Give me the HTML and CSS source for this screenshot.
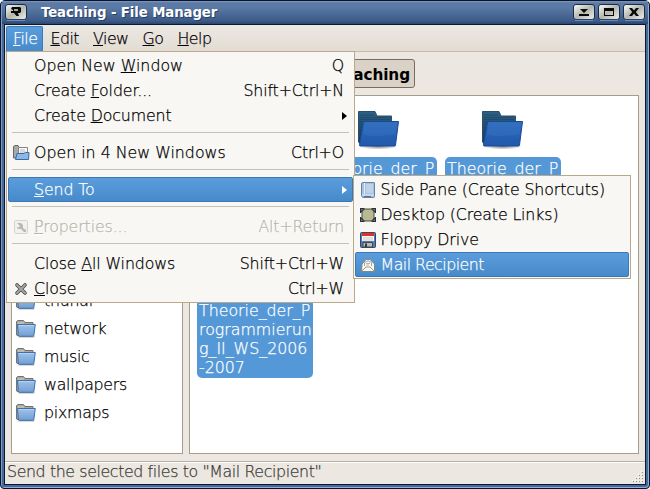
FILE: index.html
```html
<!DOCTYPE html>
<html lang="en">
<head>
<meta charset="utf-8">
<title>Teaching - File Manager</title>
<link rel="stylesheet" href="styles.css">
</head>
<body>
<svg width="0" height="0" class="defs">
  <defs>
    <linearGradient id="btn" x1="0" y1="0" x2="1" y2="1"><stop offset="0" stop-color="#fdfdfa"/><stop offset=".5" stop-color="#b5b7ae"/><stop offset="1" stop-color="#f0f0ea"/></linearGradient>
    <linearGradient id="fb" x1="0" y1="0" x2="0" y2="1"><stop offset="0" stop-color="#2d6089"/><stop offset="1" stop-color="#1f3950"/></linearGradient>
    <linearGradient id="ff" x1="0" y1="0" x2="0" y2="1"><stop offset="0" stop-color="#2d6bbd"/><stop offset="1" stop-color="#2158aa"/></linearGradient>
    <radialGradient id="sh"><stop offset="0" stop-color="#000" stop-opacity=".5"/><stop offset="1" stop-color="#000" stop-opacity="0"/></radialGradient>
    <linearGradient id="sf" x1="0" y1="0" x2="0" y2="1"><stop offset="0" stop-color="#a0c2e8"/><stop offset="1" stop-color="#709fd4"/></linearGradient>
    <symbol id="big" viewBox="0 0 44 40">
      <ellipse cx="21.500" cy="36.500" rx="20" ry="3" fill="url(#sh)"/>
      <path d="M1.500 1.500H18l2 4.500h14.500V34H3.500L1.500 32z" fill="url(#fb)" stroke="#294f6c"/>
      <path d="M3 5h14M3 7.500h30M3 9.500h30M3 11.500h3M3 14h3M3 17h3M3 20h3M3 23h2M3 26h1" stroke="#173d58" stroke-width=".8" opacity=".6"/>
      <path d="M6.500 11.500h35l-3 23.500q0 1-1 1H3.500q-1.500 0-1-1.500z" fill="url(#ff)" stroke="#174a99"/>
      <path d="M7.500 12.500h33l-2 12Q22 27 6 25z" fill="#4d86cf" opacity=".22"/>
    </symbol>
    <symbol id="small" viewBox="0 0 21 19">
      <path d="M.5 16V2.500L2 1.500h5.500L9 3.500h8V8H3v9z" fill="#aaa9a4" stroke="#74736f"/>
      <path d="M2 4h6M2 6h14" stroke="#d0d0cc"/>
      <path d="M2.500 17.800h16" stroke="#bbb9b5" stroke-width="1.500"/>
      <path d="M1.500 5.500h17.800l-1.500 11q0 .8-1 .8H3.500q-1 0-1.200-1z" fill="url(#sf)" stroke="#3b70ad"/>
      <path d="M2.800 6.500h15.300" stroke="#c4daf1" opacity=".7"/>
    </symbol>
  </defs>
</svg>
<div class="window">
  <header class="titlebar">
    <svg class="wbtn" width="22" height="17" viewBox="0 0 22 17"><rect x=".5" y=".5" width="21" height="15" rx="2.500" fill="url(#btn)" stroke="#182b48"/><path d="M2 16.300h18" stroke="#7398cc"/><path d="M7 3h8l1 1v4l-1 1h-2l1 3h-2.500L9 9H6V7h2V6L6 5z" fill="#090909"/><path d="M9 5h4v2H9z" fill="#a6a99e"/></svg>
    <h1>Teaching - File Manager</h1>
    <div class="controls">
      <svg class="wbtn" width="22" height="17" viewBox="0 0 22 17"><rect x=".5" y=".5" width="21" height="15" rx="2.500" fill="url(#btn)" stroke="#182b48"/><path d="M2 16.300h18" stroke="#7398cc"/><path d="M7 5h8l-4 4zM6 10h10v2H6z" fill="#090909"/></svg>
      <svg class="wbtn" width="22" height="17" viewBox="0 0 22 17"><rect x=".5" y=".5" width="21" height="15" rx="2.500" fill="url(#btn)" stroke="#182b48"/><path d="M2 16.300h18" stroke="#7398cc"/><path d="M6 4h10v8H6zM7 7v4h8V7z" fill="#090909" fill-rule="evenodd"/></svg>
      <svg class="wbtn" width="22" height="17" viewBox="0 0 22 17"><rect x=".5" y=".5" width="21" height="15" rx="2.500" fill="url(#btn)" stroke="#182b48"/><path d="M2 16.300h18" stroke="#7398cc"/><path d="M6 4h3l2 2.500L13 4h3l-3.200 4 3.200 4h-3l-2-2.500L9 12H6l3.200-4z" fill="#090909"/></svg>
    </div>
  </header>
  <main class="client">
    <nav class="menubar">
      <span class="mb on"><u>F</u>ile</span><span class="mb"><u>E</u>dit</span><span class="mb"><u>V</u>iew</span><span class="mb"><u>G</u>o</span><span class="mb"><u>H</u>elp</span>
    </nav>
    <div class="pathbar"><button class="crumb">Teaching</button></div>
    <div class="panes">
      <aside class="side">
        <div class="place"><svg width="21" height="19"><use href="#small"/></svg>thunar</div>
        <div class="place"><svg width="21" height="19"><use href="#small"/></svg>network</div>
        <div class="place"><svg width="21" height="19"><use href="#small"/></svg>music</div>
        <div class="place"><svg width="21" height="19"><use href="#small"/></svg>wallpapers</div>
        <div class="place"><svg width="21" height="19"><use href="#small"/></svg>pixmaps</div>
      </aside>
      <section class="files">
        <div class="file"><svg width="44" height="40"><use href="#big"/></svg><p>Theorie_der_P</p></div>
        <div class="file"><svg width="44" height="40"><use href="#big"/></svg><p>Theorie_der_P</p></div>
        <div class="file"><svg width="44" height="40"><use href="#big"/></svg><p>Theorie_der_P</p></div>
        <div class="file"><svg width="44" height="40"><use href="#big"/></svg><p>Theorie_der_P<br>rogrammierun<br>g_II_WS_2006<br>-2007</p></div>
      </section>
    </div>
    <footer class="status"><span>Send the selected files to "Mail Recipient"</span>
      <svg width="12" height="12" viewBox="0 0 12 12"><path d="M10 1h1M7 4h1M10 4h1M4 7h1M7 7h1M10 7h1M1 10h1M4 10h1M7 10h1M10 10h1" stroke="#8f8b83" stroke-width="1" transform="translate(0 .5)"/><path d="M9 0h1M6 3h1M9 3h1M3 6h1M6 6h1M9 6h1M0 9h1M3 9h1M6 9h1M9 9h1" stroke="#fff" transform="translate(0 .5)"/></svg>
    </footer>
  </main>
</div>

<div class="menu main-menu">
  <div class="item"><i></i><span class="wide">Open New <u>W</u>indow</span><kbd>Q</kbd></div>
  <div class="item"><i></i><span>Create <u>F</u>older...</span><kbd>Shift+Ctrl+N</kbd></div>
  <div class="item"><i></i><span>Create <u>D</u>ocument</span><b class="arrow"></b></div>
  <hr>
  <div class="item"><i><svg width="17" height="16" viewBox="0 0 17 16"><path d="M.5 13V1.500L2 .5h3l1 2h1V13z" fill="#a9a9a7" stroke="#686868"/><path d="M5.500 2.500h9V12h-9z" fill="#fafafa" stroke="#858585"/><path d="M7 5h5M7 7h6" stroke="#b9b9b9"/><path d="M4 8.500h7l1.500-1h3.500l-.5 7H2.500z" fill="#8fb7e4" stroke="#366ba9"/></svg></i><span class="wide">Open in 4 New Windows</span><kbd>Ctrl+O</kbd></div>
  <hr>
  <div class="item on"><i></i><span><u>S</u>end To</span><b class="arrow"></b></div>
  <hr>
  <div class="item off"><i><svg width="16" height="16" viewBox="0 0 16 16"><rect x="1.500" y="1.500" width="13" height="13" rx="1" fill="#f2f1ed" stroke="#d4d3cf"/><path d="M4 4h4l2 2v3l3 2v2h-2L8 10H5L3.500 8l2 .5L7 7z" fill="#bab9b5"/></svg></i><span><u>P</u>roperties...</span><kbd>Alt+Return</kbd></div>
  <hr>
  <div class="item"><i></i><span>Close <u>A</u>ll Windows</span><kbd>Shift+Ctrl+W</kbd></div>
  <div class="item"><i><svg width="16" height="16" viewBox="0 0 16 16"><path d="M4 4l8 8M12 4l-8 8" stroke="#4c4c4a" stroke-width="3.600" stroke-linecap="round"/><path d="M4 4l8 8M12 4l-8 8" stroke="#a5a7a2" stroke-width="1.900" stroke-linecap="round"/></svg></i><span><u>C</u>lose</span><kbd>Ctrl+W</kbd></div>
</div>

<div class="menu sub-menu">
  <div class="item"><i><svg width="16" height="16" viewBox="0 0 16 16"><path d="M3 .5h11q.5 0 .5.500v13.500q0 1-1 1H3Q1.500 15 1.500 13V2Q1.500.5 3 .5z" fill="#a9c1df" stroke="#6582a8"/><path d="M4.500 1v11M2 13h12" stroke="#e4edf7"/><path d="M6 2h7v9H6z" fill="#bfd2ea"/><path d="M4 14.500h7" stroke="#566f91"/></svg></i><span>Side Pane (Create Shortcuts)</span></div>
  <div class="item"><i><svg width="16" height="16" viewBox="0 0 16 16"><path d="M2 4l3-2h6l3 2v8l-3 2H5l-3-2z" fill="#b6b991" stroke="#4b4c3a"/><path d="M0 1h5L1 6H0zM16 1h-5l4 5h1zM0 15h5l-4-5H0zM16 15h-5l4-5h1z" fill="#2a2d38"/><path d="M1 2h2L1 4zM15 2h-2l2 2zM1 14h2l-2-2zM15 14h-2l2-2z" fill="#7686a8"/></svg></i><span>Desktop (Create Links)</span></div>
  <div class="item"><i><svg width="16" height="16" viewBox="0 0 16 16"><rect x=".5" y=".5" width="15" height="15" rx="1" fill="#537cb5" stroke="#2e4870"/><path d="M2 1h12v8H2z" fill="#f8f8f8"/><path d="M2 1h12v3H2z" fill="#df3221"/><path d="M3 6h10M3 8h10" stroke="#c9c9c9"/><path d="M3 10.500h9.500V15H3z" fill="#b8b8b5" stroke="#484848"/><path d="M5 11.500h2V15H5z" fill="#383838"/></svg></i><span>Floppy Drive</span></div>
  <div class="item on"><i><svg width="16" height="16" viewBox="0 0 16 16"><path d="M2 7l4-4.500h4L14.500 7v7.500h-13z" fill="#f7f7f2" stroke="#85877f"/><path d="M4.500 9V5.500q3.500-3 7 0V9" fill="#fff" stroke="#a5a69f"/><path d="M6 6.500h4M6 8h3" stroke="#b2b3ab"/><path d="M2 14l4-4h4l4 4" fill="none" stroke="#9d9e96"/></svg></i><span class="tight">Mail Recipient</span></div>
</div>
</body>
</html>
```
FILE: styles.css
```css
* { box-sizing: border-box; }
body {
  margin: 0; width: 650px; height: 489px; overflow: hidden; background: #fff;
  font: 200 15.8px/19px "DejaVu Sans Light", "DejaVu Sans", sans-serif; color: #000;
  -webkit-text-stroke: .25px currentColor;
}
.defs { position: absolute; }
u { text-decoration-thickness: 1px; text-underline-offset: 1px; }
.window {
  width: 650px; height: 489px; border: 1px solid #0a1429; border-radius: 5px 5px 4px 4px;
  background: #47699a; box-shadow: inset 1px 1px #7d9cc8, inset -1px -1px #91aed4;
  display: flex; flex-direction: column; padding: 0 3px 3px;
}
.titlebar {
  height: 23px; flex: none; display: flex; align-items: flex-start; padding: 3px 3px 0 2px; margin: 0 -2px;
  background: linear-gradient(#8099c0 0, #5b7aa5 2px, #5b7aa5 6px, #3d5a88 20px, #29466f 23px);
}
.titlebar h1 {
  margin: 0 0 0 14px; flex: 1; font: bold 13.3px/18px "DejaVu Sans", sans-serif; color: #fff;
  text-shadow: 1px 1px #2b4263; white-space: nowrap; -webkit-text-stroke: 0; letter-spacing: -.1px;
}
.titlebar > .wbtn { margin-left: 1px; }
.controls { display: flex; gap: 3px; }
.wbtn { display: block; flex: none; }
.client {
  flex: 1; border: 1px solid #0a1935; background: #ece8e1;
  display: flex; flex-direction: column; min-height: 0;
}
.menubar {
  height: 27px; flex: none; display: flex; padding: 1px 1px 0; border-bottom: 1px solid #c5bcaa;
  background: linear-gradient(#ece8e2, #e2dcd4); letter-spacing: -.5px;
}
.mb { padding: 3px 7px 0; height: 25px; }
.mb.on {
  color: #fff; border: 1px solid #3d7abb; border-bottom: 0; border-radius: 2px 2px 0 0; padding: 2px 5px 0 6px;
  background: linear-gradient(#5a9ddb, #478acb);
}
.pathbar { height: 43px; flex: none; display: flex; padding: 7px 0 7px 310px; }
.crumb {
  width: 100px; height: 29px; border: 1px solid #776c60; border-radius: 3px; background: #dbd2c7;
  font: bold 15.3px/19px "DejaVu Sans", sans-serif; padding: 3px 4px 0; text-align: right; color: #000;
  -webkit-text-stroke: 0; letter-spacing: -.1px;
}
.panes { height: 359px; flex: none; display: flex; gap: 6px; padding: 0 6px; }
.side, .files { background: #fff; border: 1px solid #a89c8a; overflow: hidden; }
.side {
  width: 172px; flex: none; display: flex; flex-direction: column; justify-content: flex-end;
  padding: 0 0 27px 4px; letter-spacing: -.25px;
}
.place { height: 28px; display: flex; align-items: center; gap: 7px; }
.place svg { flex: none; }
.files {
  flex: 1; padding: 14px 0 0 3px; display: grid; grid-template-columns: repeat(3, 124px);
  grid-auto-rows: 142px;
}
.file { display: flex; flex-direction: column; align-items: center; gap: 7px; }
.file p {
  margin: 0; width: 116px; flex: none; background: #5598d7; color: #fff; border-radius: 5px;
  padding: 2px 0 1px 2px; white-space: nowrap;
}
.status {
  margin-top: 7px; border-top: 1px solid #b8b1a6; box-shadow: inset 0 1px #fbfaf8; flex: 1;
  display: flex; justify-content: space-between; align-items: flex-end; color: #3c3b38; padding: 0 1px 1px 2px;
}
.status span { letter-spacing: -.38px; margin-bottom: 2px; }
.menu { position: absolute; background: #f8f7f3; border: 1px solid #b9a98a; padding: 1px; white-space: nowrap; }
.main-menu { left: 6px; top: 51px; width: 349px; height: 252px; }
.sub-menu { left: 353px; top: 175px; width: 278px; height: 104px; }
.item { height: 25px; display: flex; align-items: center; padding: 0 8px 0 4px; border: 1px solid transparent; border-radius: 2px; }
.item i { width: 17px; margin-right: 4px; display: flex; flex: none; }
.sub-menu .item i { margin-right: 3.500px; }
.item span { flex: 1; letter-spacing: -.12px; }
.item .wide { letter-spacing: 0; }
.item .tight { letter-spacing: -.5px; }
.item kbd { font: inherit; letter-spacing: -.15px; }
.item.on { color: #fff; border-color: #3c78b8; background: linear-gradient(#5b9ddc, #478aca); }
.item.off { color: #b9b7b0; text-shadow: 1px 1px #fff; }
.arrow { border: 4px solid transparent; border-left: 5px solid currentColor; border-right: 0; margin-right: -3px; }
hr { height: 1px; border: 0; background: #c3c1bd; margin: 4px 4px 7px; }
```
